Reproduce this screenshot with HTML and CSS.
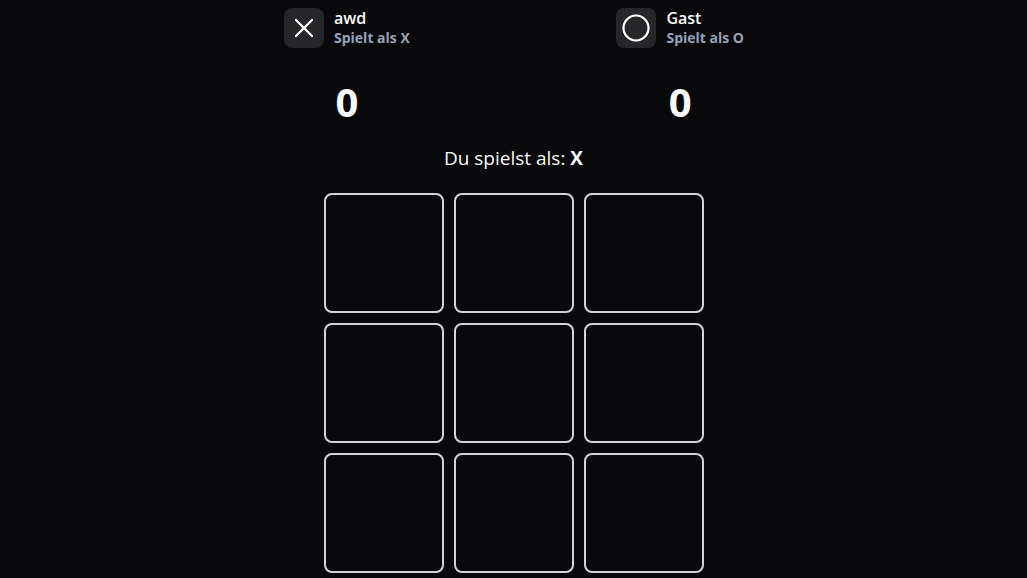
FILE: index.html
```html
<!DOCTYPE html>
<html lang="de">
<head>
<meta charset="utf-8">
<title>Tic Tac Toe</title>
<link rel="stylesheet" href="styles.css">
</head>
<body>
<main class="game">
  <div class="players">
    <div class="player">
      <div class="card">
        <div class="avatar">
          <svg width="40" height="40" viewBox="0 0 40 40"><path d="M12 12 L28 28 M28 12 L12 28" stroke="#fff" stroke-width="2.2" stroke-linecap="round" fill="none"/></svg>
        </div>
        <div class="info">
          <div class="name">awd</div>
          <div class="role">Spielt als X</div>
        </div>
      </div>
      <div class="score">0</div>
    </div>
    <div class="player">
      <div class="card">
        <div class="avatar">
          <svg width="40" height="40" viewBox="0 0 40 40"><circle cx="20" cy="20" r="12.5" stroke="#fff" stroke-width="2.2" fill="none"/></svg>
        </div>
        <div class="info">
          <div class="name">Gast</div>
          <div class="role">Spielt als O</div>
        </div>
      </div>
      <div class="score">0</div>
    </div>
  </div>
  <p class="turn">Du spielst als: <b>X</b></p>
  <div class="board">
    <button class="cell"></button><button class="cell"></button><button class="cell"></button>
    <button class="cell"></button><button class="cell"></button><button class="cell"></button>
    <button class="cell"></button><button class="cell"></button><button class="cell"></button>
  </div>
</main>
</body>
</html>
```

FILE: styles.css
```css
html, body {
  margin: 0;
  padding: 0;
  background: #09090b;
  color: #fafafa;
  font-family: "Open Sans", "Noto Sans", sans-serif;
  height: 100%;
  overflow: hidden;
}

.game {
  display: flex;
  flex-direction: column;
  align-items: center;
  padding-top: 8px;
}

.players {
  width: 460px;
  display: flex;
  justify-content: space-between;
  margin-left: 1px;
}

.player {
  display: flex;
  flex-direction: column;
  align-items: center;
}

.card {
  display: flex;
  align-items: center;
  gap: 10px;
}

.avatar {
  width: 40px;
  height: 40px;
  border-radius: 8px;
  background: #27272a;
  display: flex;
}

.info {
  display: flex;
  flex-direction: column;
}

.name {
  font-size: 16px;
  font-weight: 600;
  line-height: 20px;
}

.role {
  font-size: 14px;
  font-weight: 700;
  line-height: 20px;
  color: #94a3b8;
}

.score {
  margin-top: 30px;
  font-size: 40px;
  font-weight: 700;
  line-height: 48px;
}

.turn {
  margin: 20px 0 0;
  font-size: 19px;
  line-height: 24px;
}

.turn b {
  font-weight: 700;
}

.board {
  margin-top: 23px;
  margin-left: 1px;
  display: grid;
  grid-template-columns: repeat(3, 120px);
  grid-auto-rows: 120px;
  gap: 10px;
}

.cell {
  background: #09090b;
  border: 2px solid #d4d4d8;
  border-radius: 8px;
  padding: 0;
}
```
